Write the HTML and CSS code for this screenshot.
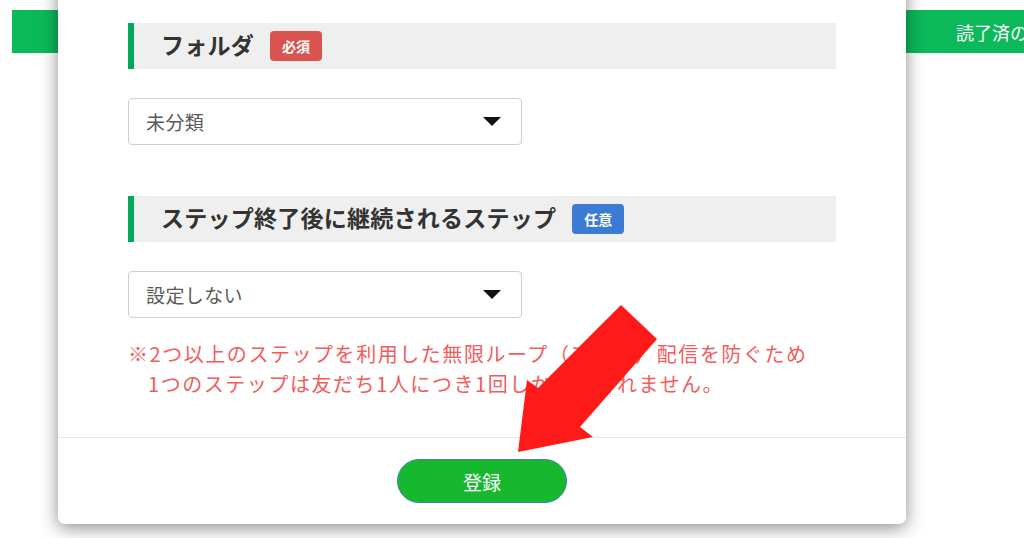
FILE: index.html
```html
<!DOCTYPE html>
<html lang="ja">
<head>
  <meta charset="UTF-8" />
  <title>ステップ登録</title>
  <link rel="stylesheet" href="styles.css">
</head>
<body>

  <!-- Page behind the modal -->
  <div class="topbar">
    <span class="topbar-label">読了済の</span>
  </div>

  <!-- Modal -->
  <div class="modal">
    <div class="modal-body">

      <div class="field-head">
        <span class="field-title">フォルダ</span>
        <span class="badge badge-required">必須</span>
      </div>
      <div class="select">
        <span>未分類</span>
        <svg class="caret" width="18" height="9" viewBox="0 0 18 9"><polygon points="0,0 18,0 9,9" fill="#111"/></svg>
      </div>

      <div class="field-head second">
        <span class="field-title">ステップ終了後に継続されるステップ</span>
        <span class="badge badge-optional">任意</span>
      </div>
      <div class="select">
        <span>設定しない</span>
        <svg class="caret" width="18" height="9" viewBox="0 0 18 9"><polygon points="0,0 18,0 9,9" fill="#111"/></svg>
      </div>

      <p class="note">
        ※2つ以上のステップを利用した無限ループ（フロー）配信を防ぐため<br>
        <span class="indent">1つのステップは友だち1人につき1回しか登録されません。</span>
      </p>
    </div>

    <div class="modal-footer">
      <button class="btn-submit">登録</button>
    </div>
  </div>

  <!-- Annotation arrow -->
  <svg class="pointer" width="1024" height="538" viewBox="0 0 1024 538">
    <polygon points="621,305 657,339 580,427 593,437 518,452 527,380 538,388" fill="#ff1a1a"/>
  </svg>

</body>
</html>
```

FILE: styles.css
```css
* {
  box-sizing: border-box;
}

body {
  margin: 0;
  width: 1024px;
  height: 538px;
  overflow: hidden;
  position: relative;
  background: #fff;
  font-family: "Noto Sans CJK JP", "Noto Sans", sans-serif;
  color: #333;
}

/* Background page */
.topbar {
  margin: 10px 0 0 12px;
  height: 43px;
  background-color: #0cb95a;
  display: flex;
  align-items: center;
  padding-left: 944px;
  white-space: nowrap;
  overflow: hidden;
}

.topbar-label {
  color: #fff;
  font-size: 18px;
}

/* Modal */
.modal {
  position: absolute;
  top: -30px;
  left: 58px;
  width: 848px;
  background: #fff;
  border-radius: 0 0 7px 7px;
  box-shadow: 0 4px 18px rgba(0,0,0,0.45);
}

.modal-body {
  padding: 53px 70px 38px;
}

.field-head {
  height: 46px;
  display: flex;
  align-items: center;
  background: #efefef;
  border-left: 6px solid #00a85a;
  padding-left: 27px;
}

.field-head.second {
  margin-top: 51px;
}

.field-title {
  font-size: 23px;
  font-weight: bold;
  color: #333;
  line-height: 1;
  letter-spacing: 0.25px;
  margin-top: -3px;
}

.badge {
  margin-left: 16px;
  width: 52px;
  height: 30px;
  border-radius: 4px;
  color: #fff;
  font-size: 14px;
  font-weight: bold;
  line-height: 30px;
  text-align: center;
}

.badge-required {
  background: #d9534f;
}

.badge-optional {
  background: #3c7bd4;
}

.select {
  margin-top: 29px;
  width: 394px;
  height: 47px;
  border: 1px solid #cfcfcf;
  border-radius: 4px;
  display: flex;
  align-items: center;
  justify-content: space-between;
  padding: 0 20px 0 17px;
  font-size: 19px;
  letter-spacing: 0.4px;
  color: #5a5a5a;
}

.caret {
  display: block;
}

.note {
  margin: 21px 0 0;
  color: #f25c5c;
  font-size: 20px;
  line-height: 30px;
  letter-spacing: 1.55px;
}

.indent {
  padding-left: 20px;
}

.modal-footer {
  border-top: 1px solid #e5e5e5;
  padding: 21px 0;
  display: flex;
  justify-content: center;
}

.btn-submit {
  width: 170px;
  height: 44px;
  border-radius: 22px;
  border: 1.5px solid #4a7fa8;
  background: #15b82e;
  color: #fff;
  font-family: inherit;
  font-size: 19px;
  cursor: pointer;
}

/* Annotation overlay */
.pointer {
  position: absolute;
  top: 0;
  left: 0;
}
```
